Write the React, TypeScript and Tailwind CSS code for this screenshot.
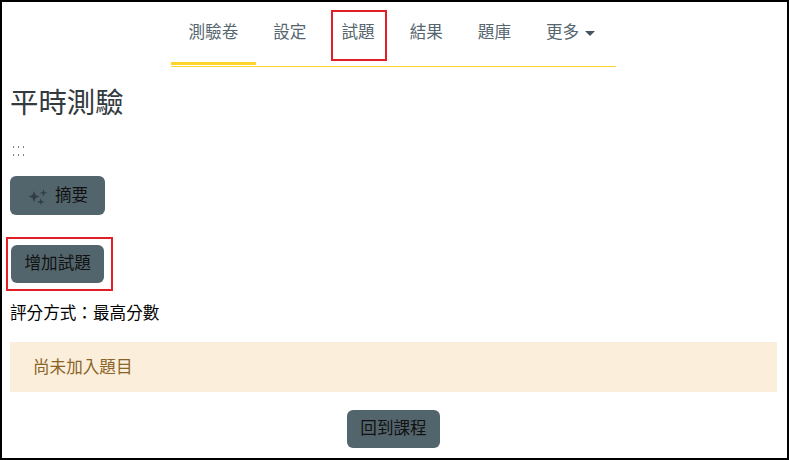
import React from "react";

const font = { fontFamily: '"Liberation Sans","Noto Sans CJK TC",sans-serif' };

function Tab({ label, active, marked, caret }: { label: string; active?: boolean; marked?: boolean; caret?: boolean }) {
  return (
    <div className={`relative flex h-[63px] items-center px-[17.5px] ${active ? "-mb-px border-b-[3px] border-[#ffd52b] pt-[1px]" : "pb-[2px]"}`}>
      <span className="flex items-center text-[16.6px] leading-6 text-[#56666f]">
        {label}
        {caret && <span className="ml-[6px] mt-[2px] h-0 w-0 border-x-[5.5px] border-t-[5px] border-x-transparent border-t-[#46545c]" />}
      </span>
      {marked && <span className="absolute left-[7px] top-[8px] h-[51px] w-[56px] border-2 border-[#e41e26]" />}
    </div>
  );
}

function Btn({ h, children }: { h: string; children: React.ReactNode }) {
  return (
    <div className={`flex items-center rounded-[6px] bg-[#53656c] px-[13.5px] text-[16.6px] leading-6 text-[#111] ${h}`}>{children}</div>
  );
}

const dots = "h-[2px] w-[13px] [background-image:radial-gradient(circle,#7d848a_0.8px,transparent_1px)] [background-size:5px_2px]";

export default function App() {
  return (
    <div style={font} className="box-border h-[460px] w-[789px] overflow-hidden border-2 border-black bg-white">
      <div className="flex justify-center pr-[2px]">
        <div className="flex h-[65px] w-[445px] items-start border-b border-[#ffd52b]">
          <Tab label="測驗卷" active />
          <Tab label="設定" />
          <Tab label="試題" marked />
          <Tab label="結果" />
          <Tab label="題庫" />
          <Tab label="更多" caret />
        </div>
      </div>

      <div className="pl-[8px] pr-[10px]">
        <div className="mt-[16px] text-[28.4px] leading-[40px] text-[#333a40]">平時測驗</div>
        <div className="ml-px mt-[20px] flex h-[16px] flex-col justify-center gap-[6px]">
          <div className={dots} />
          <div className={dots} />
        </div>
        <div className="mt-[17px] flex">
          <Btn h="h-[39px]">
            <span className="flex items-center gap-[5px] pl-[4.5px] pr-[3px]">
              <svg width="22" height="18" viewBox="0 0 22 18" fill="#333d45">
                <path d="M6 4 7.600 7.900 11.500 9.500 7.600 11.100 6 15 4.400 11.100 0.500 9.500 4.400 7.900Z" />
                <path d="M15.500 2 16.400 5 19.400 5.900 16.400 6.800 15.500 9.800 14.600 6.800 11.600 5.900 14.600 5Z" />
                <path d="M12.800 11 13.700 14 16.700 14.900 13.700 15.800 12.800 18 11.900 15.800 8.900 14.900 11.900 14Z" />
              </svg>
              摘要
            </span>
          </Btn>
        </div>
        <div className="mt-[22px] flex">
          <div className="-ml-[4px] box-border border-2 border-[#e41e26] pb-[6px] pl-[3px] pr-[6.500px] pt-[6px]">
            <Btn h="h-[38px]">增加試題</Btn>
          </div>
        </div>
        <div className="mt-[11px] text-[16.6px] leading-6 text-black">評分方式：最高分數</div>
        <div className="mt-[16px] flex h-[50px] items-center bg-[#fbeedb] pl-[23px] pt-[2px] text-[16.6px] text-[#8a6328]">尚未加入題目</div>
        <div className="mt-[18px] flex justify-center">
          <Btn h="h-[38px]">回到課程</Btn>
        </div>
      </div>
    </div>
  );
}
